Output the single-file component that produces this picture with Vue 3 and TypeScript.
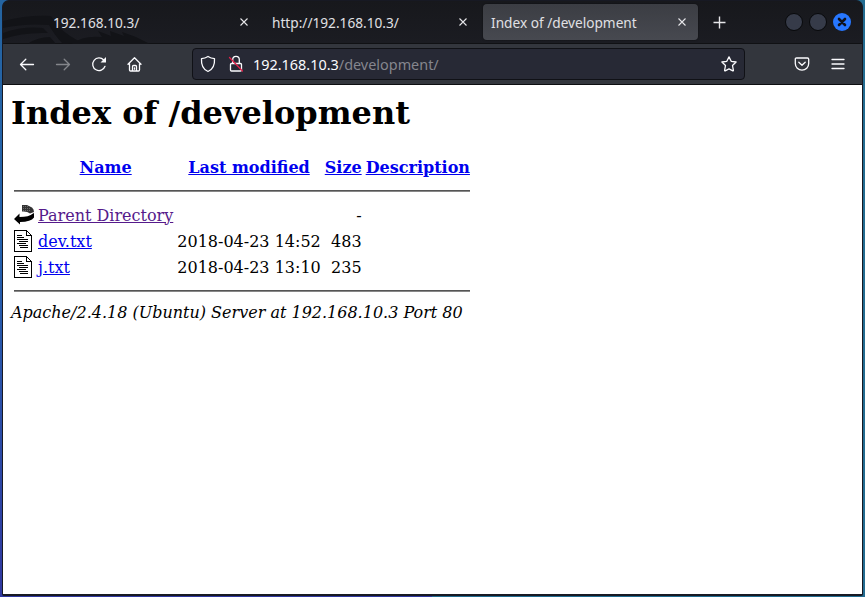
<script setup lang="ts">
interface Tab { title: string; active: boolean }
interface Entry { name: string; modified: string; size: string; kind: 'back' | 'text' }

const tabs: Tab[] = [
  { title: '192.168.10.3/', active: false },
  { title: 'http://192.168.10.3/', active: false },
  { title: 'Index of /development', active: true },
]
const columns: string[] = ['Name', 'Last modified', 'Size', 'Description']
const entries: Entry[] = [
  { name: 'Parent Directory', modified: '', size: '-', kind: 'back' },
  { name: 'dev.txt', modified: '2018-04-23 14:52', size: '483', kind: 'text' },
  { name: 'j.txt', modified: '2018-04-23 13:10', size: '235', kind: 'text' },
]
</script>

<template>
  <div class="desktop">
    <div class="window">
      <header class="tabbar">
        <svg class="dragon" width="150" height="43" viewBox="0 0 150 43" aria-hidden="true">
          <path d="M0 20Q24 14 48 15L56 26Q65 35 78 41L60 43Q52 35 46 24Q22 22 0 27ZM0 32Q20 25 40 27L45 32Q20 31 0 38ZM24 43Q35 36 47 36L53 43ZM68 43Q81 34 99 36L95 30L108 35L107 30L121 35L119 31L133 36L147 43Z" />
        </svg>
        <div v-for="tab in tabs" :key="tab.title" class="tab" :class="{ active: tab.active }">
          <span class="label">{{ tab.title }}</span>
          <svg class="close" width="8" height="8" viewBox="0 0 8 8"><path d="M.5.5l7 7M7.5.5l-7 7" /></svg>
        </div>
        <svg class="plus" width="13" height="13" viewBox="0 0 13 13"><path d="M6.500.500v12M.500 6.500h12" /></svg>
        <div class="controls">
          <i class="dot"></i><i class="dot"></i>
          <svg width="18" height="18" viewBox="0 0 18 18"><circle cx="9" cy="9" r="9" fill="#2777ff" /><path d="M6 6l6 6M12 6l-6 6" stroke="#10131c" stroke-width="2.6" stroke-linecap="round" /></svg>
        </div>
      </header>
      <nav class="toolbar">
        <svg class="icon back" width="16" height="16" viewBox="0 0 16 16"><path d="M14.500 8.500H1.500M6.800 3.200L1.500 8.500l5.300 5.300" /></svg>
        <svg class="icon forward" width="16" height="16" viewBox="0 0 16 16"><path d="M1.500 8.500h13M9.200 3.200L14.500 8.500l-5.300 5.300" /></svg>
        <svg class="icon reload" width="16" height="16" viewBox="0 0 16 16"><path d="M14 10.300A6.300 6.300 0 1 1 12.700 4" /><path d="M15 1v5.500H9.500Z" fill="#fbfbfe" stroke="none" /></svg>
        <svg class="icon home" width="16" height="16" viewBox="0 0 16 16"><path d="M1 8.300L7.500 1.700 14 8.300M2.500 7.500v6.500q0 1 1 1h8q1 0 1-1V7.500M5.500 14.500V10.500q0-1 1-1h2q1 0 1 1v4M7.500 12v1.200" /></svg>
        <div class="url">
          <svg class="icon shield" width="16" height="18" viewBox="0 0 16 18"><path d="M8 1.500Q11 3.400 14.500 3.600C14.900 9.500 12.600 14.500 8 16.500C3.400 14.500 1.100 9.500 1.500 3.600Q5 3.400 8 1.500Z" /></svg>
          <svg class="icon lock" width="16" height="18" viewBox="0 0 16 18"><path d="M4.700 8V4.600a3.300 3.300 0 0 1 6.600 0V8M3.500 8.500h9q1 0 1 1v5.500q0 1-1 1h-9q-1 0-1-1V9.500q0-1 1-1Z" /><path d="M1.500 2.500l13 13.500" stroke="#e2204a" /></svg>
          <span class="address"><b>192.168.10.3</b>/development/</span>
          <svg class="icon star" width="16" height="16" viewBox="0 0 16 16"><path d="M8 .9L10.200 5.300l4.900.7-3.600 3.500.9 4.900q0 .6-.6.5L8 12.900l-3.800 2q-.6.1-.6-.5l.9-4.900L.9 6l4.900-.7Z" /></svg>
        </div>
        <svg class="icon pocket" width="16" height="16" viewBox="0 0 16 16"><path d="M2.500 2h11q1.200 0 1.200 1.200V7.500a6.700 6.700 0 0 1-13.400 0V3.200Q1.300 2 2.500 2ZM4.800 6.200L8 9.300l3.200-3.100" /></svg>
        <svg class="icon menu" width="14" height="12" viewBox="0 0 14 12"><path d="M1 1.500h12M1 6h12M1 10.500h12" /></svg>
      </nav>
      <main class="page">
        <h1>Index of /development</h1>
        <table>
          <tbody>
            <tr>
              <th class="ic"><div class="blank"></div></th>
              <th v-for="column in columns" :key="column"><a href="#">{{ column }}</a></th>
            </tr>
            <tr><th colspan="5"><hr /></th></tr>
            <tr v-for="entry in entries" :key="entry.name">
              <td class="ic">
                <svg v-if="entry.kind === 'back'" width="20" height="22" viewBox="0 0 20 22">
                  <path d="M8 1H13L18 3.500Q20 5 20 8L16 9.500Q13 7 8 7.500Z" fill="#333" />
                  <path d="M9 2.500h5M9 4.500h7M9 6.500h7" stroke="#777" stroke-width=".8" stroke-dasharray="1 1" />
                  <path d="M0 15L5.500 9.500V13Q15 13 19 9.500L20 9V13.500Q17 17.800 6 18V20.500Z" fill="#000" />
                </svg>
                <svg v-else width="20" height="22" viewBox="0 0 20 22" shape-rendering="crispEdges">
                  <path d="M.5.500H12.500L17.500 5.500V21.500H.5ZM12.500.500V5.500H17.500" fill="#fff" stroke="#000" />
                  <path d="M3 5.500h5M3 7.500h7M3 9.500h11M5 11.500h9M3 13.500h9M5 15.500h9M6 17.500h8" stroke="#000" />
                </svg>
              </td>
              <td><a href="#" :class="{ visited: entry.kind === 'back' }">{{ entry.name }}</a></td>
              <td class="right">{{ entry.modified }}</td>
              <td class="right">{{ entry.size }}</td>
              <td></td>
            </tr>
            <tr><th colspan="5"><hr /></th></tr>
          </tbody>
        </table>
        <address>Apache/2.4.18 (Ubuntu) Server at 192.168.10.3 Port 80</address>
      </main>
    </div>
  </div>
</template>

<style>
body { margin: 0; }
</style>

<style scoped>
* { box-sizing: border-box; }
.desktop { width: 865px; height: 597px; padding: 0 2px 1px 2px; background: linear-gradient(90deg, transparent 50%, #236c91 50%), linear-gradient(#2464a0, #2563ae 40%, #3038a0); }
.window { height: 596px; border: 1px solid #171923; border-width: 1px 1px 2px; border-radius: 7px 7px 2px 2px; overflow: hidden; background: #1a1b20; }
.tabbar { position: relative; display: flex; align-items: center; height: 43px; padding: 3px 11px 3px 42px; background: linear-gradient(#17181c, #1b1c22); border-bottom: 1px solid #101114; font: 15px "Noto Sans", sans-serif; color: #e0e0e4; }
.dragon { position: absolute; left: 0; top: 0; fill: #121317; }
.tab { position: relative; display: flex; align-items: center; justify-content: space-between; width: 215px; height: 36px; margin-right: 4px; padding: 0 12px 0 8px; border-radius: 4px; }
.tab.active { background: linear-gradient(#3b3d43, #474950); box-shadow: 0 0 2px #0008; }
.label { display: inline-block; white-space: nowrap; transform: scaleX(.91); transform-origin: left; }
.close, .plus { fill: none; stroke: #e6e6e9; stroke-width: 1.1; }
.plus { margin-left: 11px; stroke-width: 1.4; }
.controls { display: flex; gap: 6px; margin-left: auto; }
.dot { width: 18px; height: 18px; border: 1px solid #08090b; border-radius: 50%; background: #363b49; }
.toolbar { display: flex; align-items: center; height: 41px; padding: 0 17px 0 16px; background: #33363d; border-bottom: 1px solid #0d0e11; font: 15px "Noto Sans", sans-serif; }
.icon { flex: none; fill: none; stroke: #fbfbfe; stroke-width: 1.3; stroke-linejoin: round; stroke-linecap: round; }
.forward { margin-left: 20px; stroke: #84868b; }
.reload, .home { margin-left: 20px; }
.url { display: flex; align-items: center; width: 553px; height: 32px; margin-left: 49px; padding: 0 7px; border: 1px solid #101116; border-radius: 4px; background: #272935; }
.lock { margin-left: 12px; }
.address { display: inline-block; margin-left: 9px; color: #85868e; white-space: nowrap; transform: scaleX(.961); transform-origin: left; }
.address b { font-weight: 400; color: #fbfbfe; }
.star { margin-left: auto; }
.pocket { margin-left: 49px; }
.menu { margin-left: auto; }
.page { height: 509px; padding: 9px 8px 8px; background: #fff; color: #000; font: 16px "DejaVu Serif", serif; }
h1 { margin: 0 0 21px; font-size: 32px; line-height: 38px; }
table { border-spacing: 2px; border-collapse: separate; }
th, td { padding: 1px; white-space: nowrap; line-height: 19px; }
.ic { width: 22px; line-height: 0; }
.blank { width: 20px; height: 22px; }
hr { height: 2px; margin: 8px 0; border: 0; border-top: 1px solid #555; border-bottom: 1px solid #888; }
a { color: #0000ee; text-decoration: underline; }
a.visited { color: #551a8b; }
.right { text-align: right; }
address { line-height: 19px; white-space: nowrap; }
</style>
